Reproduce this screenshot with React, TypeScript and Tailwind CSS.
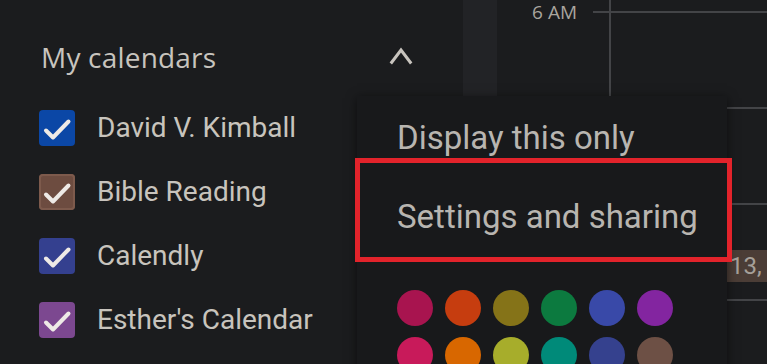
import React from "react";

const calendars = [
  { name: "David V. Kimball", color: "bg-[#0b47a6]" },
  { name: "Bible Reading", color: "bg-[#6d4c40] ring-2 ring-inset ring-[#7d5a4c]" },
  { name: "Calendly", color: "bg-[#34408f]" },
  { name: "Esther's Calendar", color: "bg-[#7c4890]" },
];

const swatches = [
  "bg-[#a8144f]",
  "bg-[#c63d0f]",
  "bg-[#857318]",
  "bg-[#0c7a3f]",
  "bg-[#3949a8]",
  "bg-[#8325a0]",
  "bg-[#c81a5a]",
  "bg-[#d86700]",
  "bg-[#a7ad2b]",
  "bg-[#008a79]",
  "bg-[#35418e]",
  "bg-[#6d5045]",
];

function Check() {
  return (
    <svg width="36" height="36" viewBox="0 0 36 36" fill="none">
      <path
        d="M7 20.5 L14 27.5 L29.5 11.5"
        stroke="#eeeae6"
        strokeWidth="4"
        strokeLinecap="round"
        strokeLinejoin="round"
      />
    </svg>
  );
}

export default function App() {
  return (
    <div className="relative flex h-[364px] w-[767px] overflow-hidden bg-[#1b1c1e] font-['Roboto',sans-serif]">
      {/* sidebar */}
      <aside className="w-[463px] shrink-0 pt-[35px]">
        <header className="flex h-[44px] items-center justify-between pl-[41px] pr-[50px]">
          <h2 className="font-['Open_Sans',sans-serif] text-[28px] font-medium tracking-[0.2px] text-[#c8c4be]">
            My calendars
          </h2>
          <svg width="24" height="24" viewBox="0 0 24 24" fill="none">
            <path
              d="M1.8 18.5 L12 5 L22.2 18.5"
              stroke="#c8c4be"
              strokeWidth="3"
              strokeLinejoin="miter"
            />
          </svg>
        </header>
        <ul className="mt-[17px]">
          {calendars.map((c) => (
            <li key={c.name} className="flex h-[64px] items-center pl-[39px]">
              <span className={`flex h-[36px] w-[36px] items-center justify-center rounded-[4px] ${c.color}`}>
                <Check />
              </span>
              <span className="ml-[22px] text-[28px] text-[#c8c4bd]">{c.name}</span>
            </li>
          ))}
        </ul>
      </aside>

      {/* scroll strip */}
      <div className="w-[34px] shrink-0 bg-[#222326]" />

      {/* time gutter */}
      <div className="w-[96px] shrink-0">
        <div className="mt-[3px] flex h-[19px] items-center justify-end pr-[16px] font-['Open_Sans',sans-serif] text-[19px] leading-[19px] text-[#a9a59e]">
          6 AM
        </div>
      </div>

      {/* day grid */}
      <div className="flex-1">
        <div className="ml-[16px] h-[11px] border-l-2 border-[#434447]" />
        {[0, 1, 2, 3].map((i) => (
          <div key={i} className="relative h-[96px] border-t-2 border-[#434447]">
            <div className="ml-[16px] h-full border-l-2 border-[#434447]" />
            {i === 2 && (
              <div className="absolute left-[134px] top-[45px] h-[32px] w-[40px] overflow-hidden bg-[#4b3d36] pl-[3px] text-[24px] leading-[32px] text-[#a6a099]">
                13,
              </div>
            )}
          </div>
        ))}
      </div>

      {/* popup menu */}
      <div className="absolute left-[357px] top-[96px] h-[280px] w-[370px] bg-[#18191b] pt-[2px] shadow-[0_2px_10px_rgba(0,0,0,0.55)]">
        <div className="flex h-[79px] items-center pl-[40px] text-[33px] text-[#b8b5b0]">Display this only</div>
        <div className="flex h-[79px] items-center pl-[40px] text-[33px] text-[#b8b5b0]">Settings and sharing</div>
        <div className="mt-[34px] grid w-fit grid-cols-6 gap-x-[12px] gap-y-[11px] pl-[40px]">
          {swatches.map((s) => (
            <span key={s} className={`h-[36px] w-[36px] rounded-full ${s}`} />
          ))}
        </div>
      </div>

      {/* highlight annotation */}
      <div className="absolute left-[355px] top-[158px] h-[104px] w-[377px] border-[5px] border-[#e2232b]" />
    </div>
  );
}
